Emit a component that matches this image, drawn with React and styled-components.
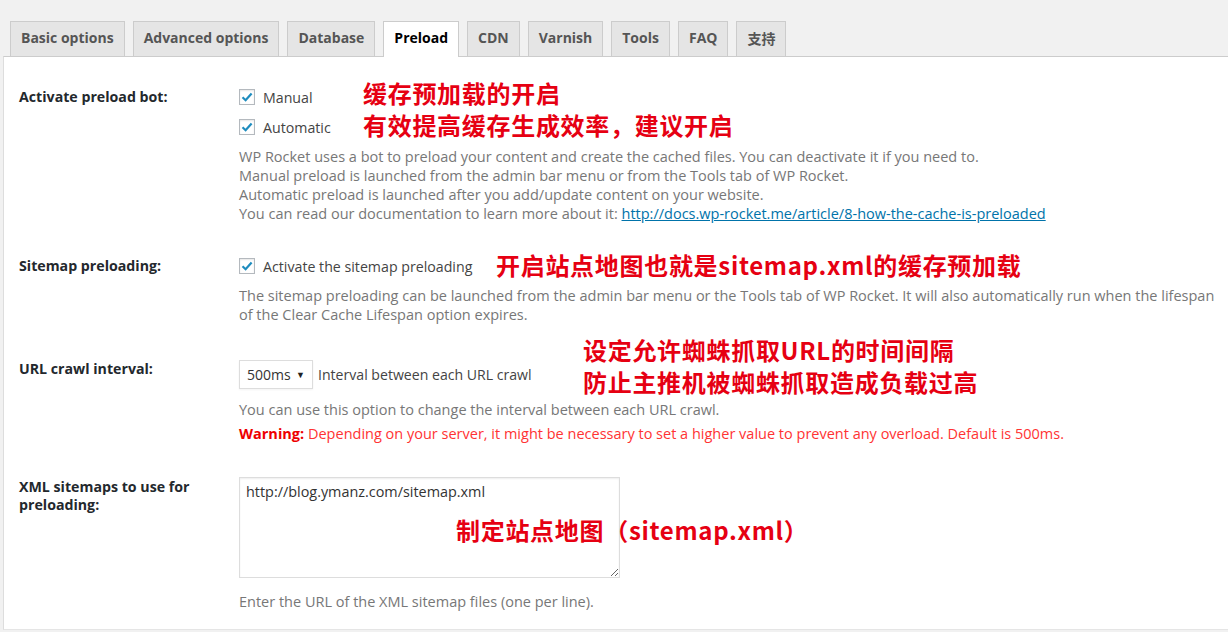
import React from 'react'
import styled, { createGlobalStyle } from 'styled-components'

const GlobalStyle = createGlobalStyle`
    html, body{
        margin: 0;
        padding: 0;
        background: #f1f1f1;
        font-family: "Open Sans", "Noto Sans", sans-serif;
        font-size: 14px;
        color: #444;
    }
`

const TabBar = styled.div`
    display: flex;
    gap: 8px;
    padding: 0 0 0 10px;
    box-sizing: border-box;
    height: 56px;
    align-items: flex-end;
`

const Tab = styled.div`
    height: ${p => (p.active ? '36px' : '35px')};
    margin-bottom: ${p => (p.active ? '-1px' : '0')};
    box-sizing: border-box;
    padding: 0 10px;
    display: flex;
    align-items: center;
    padding-bottom: ${p => (p.active ? '4px' : '3px')};
    border: 1px solid #ccc;
    border-bottom: none;
    background: ${p => (p.active ? '#fff' : '#e5e5e5')};
    color: ${p => (p.active ? '#000' : '#555')};
    font-weight: 700;
    font-size: 14px;
    font-family: "Open Sans", "Noto Sans CJK SC", sans-serif;
    position: relative;
    z-index: 1;
`

const Panel = styled.div`
    position: relative;
    margin-left: 3px;
    background: #fff;
    border-top: 1px solid #ccc;
    border-left: 1px solid #ddd;
    border-bottom: 1px solid #e5e5e5;
    height: 574px;
    box-sizing: border-box;
    padding: 28px 0 0 15px;
`

const Row = styled.div`
    display: grid;
    grid-template-columns: 220px 1fr;
    margin-bottom: ${p => p.gap || 0}px;
`

const Label = styled.div`
    font-weight: 700;
    font-size: 14.2px;
    color: #23282d;
    line-height: 18px;
    padding-top: ${p => p.top || 0}px;
`

const Controls = styled.div`
    display: flex;
    flex-direction: column;
`

const CheckLine = styled.label`
    display: flex;
    align-items: center;
    gap: 8px;
    height: 24px;
    margin-bottom: 6px;
    color: #444;
    font-size: 14.2px;
`

const Box = styled.span`
    width: 16px;
    height: 16px;
    box-sizing: border-box;
    border: 1px solid #b4b9be;
    background: #fff;
    box-shadow: inset 0 1px 2px rgba(0,0,0,.1);
    display: flex;
    align-items: center;
    justify-content: center;
`

const Desc = styled.p`
    margin: ${p => p.top || 0}px 0 0;
    line-height: 19px;
    color: #777;
    font-size: 14.5px;
    padding-right: 6px;
`

const Link = styled.a`
    color: #0073aa;
    text-decoration: underline;
`

const Warn = styled.p`
    margin: 5px 0 0;
    line-height: 19px;
    color: #f33;
    font-size: 14.5px;
    b{ color: #e00; }
`

const SelectLine = styled.div`
    display: flex;
    align-items: center;
    gap: 5px;
    font-size: 14.1px;
    color: #444;
`

const Select = styled.div`
    width: 74px;
    height: 29px;
    box-sizing: border-box;
    border: 1px solid #ddd;
    box-shadow: 0 1px 2px rgba(0,0,0,.05);
    display: flex;
    align-items: center;
    justify-content: space-between;
    padding: 0 7px 0 7px;
    font-size: 14px;
    color: #333;
    span{ font-size: 9px; color: #222; }
`

const TextArea = styled.textarea`
    width: 381px;
    height: 101px;
    box-sizing: border-box;
    border: 1px solid #ddd;
    box-shadow: inset 0 1px 2px rgba(0,0,0,.07);
    padding: 4px 6px;
    margin-top: -1px;
    font-family: "Open Sans", sans-serif;
    font-size: 14.4px;
    color: #333;
    resize: both;
    outline: none;
`

const Note = styled.div`
    position: absolute;
    left: ${p => p.x}px;
    top: ${p => p.y}px;
    color: #e60012;
    font-weight: 700;
    font-size: 24px;
    line-height: 28px;
    letter-spacing: 0.7px;
    font-family: "Noto Sans CJK SC", sans-serif;
    white-space: nowrap;
`

const Check = () => (
    <Box>
        <svg width="12" height="12" viewBox="0 0 12 12">
            <path d="M1.5 6.2 L4.6 9.2 L10.6 2.4" fill="none" stroke="#1e8cbe" strokeWidth="2.2" />
        </svg>
    </Box>
)

const tabs = ['Basic options', 'Advanced options', 'Database', 'Preload', 'CDN', 'Varnish', 'Tools', 'FAQ', '支持']

const App = () => {
    return (
        <>
            <GlobalStyle />
            <TabBar>
                {tabs.map(t => (
                    <Tab key={t} active={t === 'Preload'}>{t}</Tab>
                ))}
            </TabBar>
            <Panel>
                <Row gap={31}>
                    <Label top={3}>Activate preload bot:</Label>
                    <Controls>
                        <CheckLine><Check />Manual</CheckLine>
                        <CheckLine><Check />Automatic</CheckLine>
                        <Desc top={2}>
                            WP Rocket uses a bot to preload your content and create the cached files. You can deactivate it if you need to.<br />
                            Manual preload is launched from the admin bar menu or from the Tools tab of WP Rocket.<br />
                            Automatic preload is launched after you add/update content on your website.<br />
                            You can read our documentation to learn more about it: <Link href="#">http://docs.wp-rocket.me/article/8-how-the-cache-is-preloaded</Link>
                        </Desc>
                    </Controls>
                </Row>
                <Row gap={36}>
                    <Label top={3}>Sitemap preloading:</Label>
                    <Controls>
                        <CheckLine><Check />Activate the sitemap preloading</CheckLine>
                        <Desc top={2}>
                            The sitemap preloading can be launched from the admin bar menu or the Tools tab of WP Rocket. It will also automatically run when the lifespan of the Clear Cache Lifespan option expires.
                        </Desc>
                    </Controls>
                </Row>
                <Row gap={35}>
                    <Label>URL crawl interval:</Label>
                    <Controls>
                        <SelectLine>
                            <Select>500ms<span>▼</span></Select>
                            Interval between each URL crawl
                        </SelectLine>
                        <Desc top={11}>You can use this option to change the interval between each URL crawl.</Desc>
                        <Warn><b>Warning:</b> Depending on your server, it might be necessary to set a higher value to prevent any overload. Default is 500ms.</Warn>
                    </Controls>
                </Row>
                <Row>
                    <Label>XML sitemaps to use for<br />preloading:</Label>
                    <Controls>
                        <TextArea defaultValue="http://blog.ymanz.com/sitemap.xml" />
                        <Desc top={14}>Enter the URL of the XML sitemap files (one per line).</Desc>
                    </Controls>
                </Row>
                <Note x={359} y={22}>缓存预加载的开启</Note>
                <Note x={359} y={54}>有效提高缓存生成效率，建议开启</Note>
                <Note x={492} y={194}>开启站点地图也就是sitemap.xml的缓存预加载</Note>
                <Note x={579} y={279}>设定允许蜘蛛抓取URL的时间间隔</Note>
                <Note x={579} y={311}>防止主推机被蜘蛛抓取造成负载过高</Note>
                <Note x={452} y={459}>制定站点地图（sitemap.xml）</Note>
            </Panel>
        </>
    )
}

export default App
